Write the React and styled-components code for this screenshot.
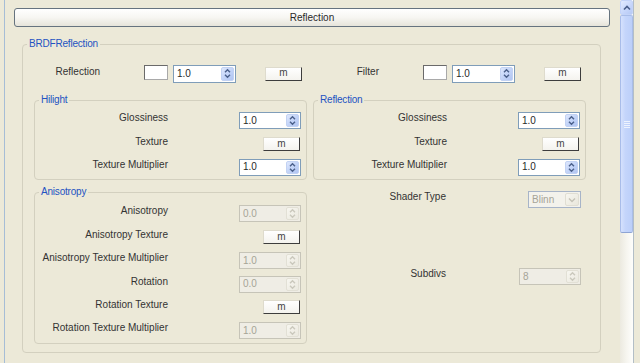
import React from 'react';
import styled, { createGlobalStyle } from 'styled-components';

const Global = createGlobalStyle`
  html, body { margin: 0; padding: 0; background: #ECE9D8; }
  body {
    font-family: "Liberation Sans", Arial, sans-serif;
    font-size: 10px;
    color: #333333;
    overflow: hidden;
  }
  * { box-sizing: border-box; }
`;

const Window = styled.div`
  width: 640px;
  height: 363px;
  overflow: hidden;
  background: #ECE9D8;
  display: flex;
`;

const Panel = styled.div`
  margin-left: 4px;
  width: 630px;
  height: 100%;
  border-left: 1px solid #a6bdd6;
  border-right: 1px solid #b3bec6;
  display: flex;
`;

const Content = styled.div`
  flex: 1;
  display: flex;
  flex-direction: column;
  min-width: 0;
`;

const HeaderButton = styled.div`
  margin: 8px 10px 0 9px;
  height: 19px;
  border: 1px solid #66737f;
  border-radius: 3px;
  background: linear-gradient(#ffffff 0%, #f7f6f2 50%, #e6e4da 100%);
  display: flex;
  align-items: center;
  justify-content: center;
  font-size: 10px;
  color: #2a2a2a;
`;

const Group = styled.fieldset`
  margin: 0;
  padding: 0;
  min-width: 0;
  border: 1px solid #d3d0bf;
  border-radius: 4px;
`;

const Legend = styled.legend`
  margin-left: 4px;
  padding: 0 2px;
  line-height: 12px;
  font-size: 10px;
  letter-spacing: -0.2px;
  color: #2353c2;
`;

const BRDFGroup = styled(Group)`
  margin: 11px 0 0 17px;
  width: 579px;
`;

const BRDFInner = styled.div`
  padding: 12px 14px 8px 11px;
  display: flex;
  flex-direction: column;
`;

const Pair = styled.div`
  display: grid;
  grid-template-columns: 273px 273px;
  column-gap: 6px;
  margin-top: ${p => p.$top || 0}px;
`;

const ColorRow = styled.div`
  display: flex;
  align-items: center;
  height: 23px;
`;

const ColorLabel = styled.div`
  width: 66px;
  text-align: right;
  line-height: 12px;
  padding-bottom: 4px;
  white-space: nowrap;
`;

const Swatch = styled.div`
  margin-left: 44px;
  width: 24px;
  height: 15px;
  margin-bottom: 3px;
  background: #ffffff;
  border: 1px solid #6a6a6a;
  border-right-color: #a9a9a9;
  border-bottom-color: #a9a9a9;
`;

const GroupInner = styled.div`
  padding-top: ${p => p.$top}px;
  display: flex;
  flex-direction: column;
`;

const ParamRow = styled.div`
  display: grid;
  grid-template-columns: 133px 1fr;
  align-items: center;
  height: 23.4px;
  padding-right: 5px;
`;

const RowLabel = styled.div`
  text-align: right;
  line-height: 12px;
  padding-bottom: 5px;
  white-space: nowrap;
`;

const ControlCell = styled.div`
  display: flex;
  justify-content: flex-end;
  align-items: center;
`;

const SpinBox = styled.div`
  display: flex;
  align-items: center;
  width: ${p => p.$w || 62}px;
  height: ${p => p.$h || 17}px;
  margin-left: ${p => p.$ml || 0}px;
  border: 1px solid ${p => (p.$disabled ? '#c6c4b8' : '#7f9db9')};
  background: ${p => (p.$disabled ? '#efede5' : '#ffffff')};
  padding: 0 1px 0 0;
`;

const SpinValue = styled.span`
  flex: 1;
  padding-left: 3px;
  line-height: 12px;
  font-size: 10px;
  color: ${p => (p.$disabled ? '#a6a497' : '#2a2a2a')};
`;

const SpinButtons = styled.div`
  width: 13px;
  height: calc(100% - 2px);
  border-radius: 2px;
  display: flex;
  align-items: center;
  justify-content: center;
  background: ${p =>
    p.$disabled
      ? 'linear-gradient(135deg, #f7f6f0, #ebe9df)'
      : 'linear-gradient(135deg, #dfe8fd 0%, #c3d4f8 50%, #b1c5f2 100%)'};
  border: 1px solid ${p => (p.$disabled ? '#e2e0d5' : '#c2d2f3')};
`;

const MButton = styled.div`
  width: 37px;
  height: 14px;
  margin-left: ${p => p.$ml || 0}px;
  margin-right: ${p => p.$mr || 0}px;
  border: 1px solid #dedbcd;
  border-right-color: #3d3d3d;
  border-bottom-color: #3d3d3d;
  background: linear-gradient(#ffffff, #f4f3ee);
  display: flex;
  align-items: center;
  justify-content: center;
  font-size: 10px;
  line-height: 10px;
  color: #444;
  padding-bottom: 1px;
`;

const RightColumn = styled.div`
  display: flex;
  flex-direction: column;
  padding-top: 2px;
`;

const Spacer = styled.div`
  height: ${p => p.$h}px;
`;

const Combo = styled.div`
  width: 53px;
  height: 17px;
  border: 1px solid #a7b4c8;
  background: #f3f2ec;
  display: flex;
  align-items: center;
  padding: 1px;
`;

const ComboText = styled.span`
  flex: 1;
  padding-left: 2px;
  color: #a6a497;
  line-height: 12px;
`;

const ComboButton = styled.div`
  width: 14px;
  height: 100%;
  border-radius: 2px;
  background: linear-gradient(135deg, #f7f6f0, #e9e7dc);
  border: 1px solid #e0ded3;
  display: flex;
  align-items: center;
  justify-content: center;
`;

const Scrollbar = styled.div`
  width: 13px;
  height: 100%;
  display: flex;
  flex-direction: column;
  background: linear-gradient(to right, #eceae0 0%, #f6f5ef 50%, #fefefc 100%);
`;

const ScrollArrow = styled.div`
  height: 15px;
  border: 1px solid #c3d3f8;
  border-radius: 2px;
  background: linear-gradient(135deg, #e2ebfe 0%, #c5d5fa 60%, #b6c9f4 100%);
  display: flex;
  align-items: center;
  justify-content: center;
`;

const Thumb = styled.div`
  height: 218px;
  border: 1px solid #a9bde9;
  border-bottom-color: #8ea4d4;
  border-radius: 2px;
  background: linear-gradient(to right, #d5e1fd 0%, #c4d5fb 40%, #bccff9 100%);
  display: flex;
  align-items: center;
  justify-content: center;
`;

const Grip = styled.div`
  width: 6px;
  height: 7px;
  background: repeating-linear-gradient(#eef3fe 0px, #eef3fe 1px, transparent 1px, transparent 2px);
`;

const SpinArrows = ({ color }) => (
  <svg width="7" height="11" viewBox="0 0 7 11">
    <path d="M1 4.2 L3.5 1.7 L6 4.2" stroke={color} strokeWidth="1.4" fill="none" />
    <path d="M1 6.8 L3.5 9.3 L6 6.8" stroke={color} strokeWidth="1.4" fill="none" />
  </svg>
);

const DownArrow = ({ color }) => (
  <svg width="8" height="6" viewBox="0 0 8 6">
    <path d="M1 1.5 L4 4.5 L7 1.5" stroke={color} strokeWidth="1.4" fill="none" />
  </svg>
);

const UpArrow = ({ color }) => (
  <svg width="8" height="6" viewBox="0 0 8 6">
    <path d="M1 4.5 L4 1.5 L7 4.5" stroke={color} strokeWidth="1.6" fill="none" />
  </svg>
);

const Spinner = ({ value, disabled, w, h, ml }) => (
  <SpinBox $disabled={disabled} $w={w} $h={h} $ml={ml}>
    <SpinValue $disabled={disabled}>{value}</SpinValue>
    <SpinButtons $disabled={disabled}>
      <SpinArrows color={disabled ? '#cac8bc' : '#4a5f8a'} />
    </SpinButtons>
  </SpinBox>
);

const ColorParam = ({ label }) => (
  <ColorRow>
    <ColorLabel>{label}</ColorLabel>
    <Swatch />
    <Spinner value="1.0" w={63} h={18} ml={5} />
    <MButton $ml={29}>m</MButton>
  </ColorRow>
);

const Param = ({ label, children }) => (
  <ParamRow>
    <RowLabel>{label}</RowLabel>
    <ControlCell>{children}</ControlCell>
  </ParamRow>
);

const Tex = () => <MButton $mr={1}>m</MButton>;

export default function App() {
  return (
    <>
      <Global />
      <Window>
        <Panel>
          <Content>
            <HeaderButton>Reflection</HeaderButton>
            <BRDFGroup>
              <Legend>BRDFReflection</Legend>
              <BRDFInner>
                <Pair>
                  <ColorParam label="Reflection" />
                  <ColorParam label="Filter" />
                </Pair>
                <Pair $top={9}>
                  <Group>
                    <Legend>Hilight</Legend>
                    <GroupInner $top={3}>
                      <Param label="Glossiness"><Spinner value="1.0" /></Param>
                      <Param label="Texture"><Tex /></Param>
                      <Param label="Texture Multiplier"><Spinner value="1.0" /></Param>
                    </GroupInner>
                  </Group>
                  <Group>
                    <Legend>Reflection</Legend>
                    <GroupInner $top={3}>
                      <Param label="Glossiness"><Spinner value="1.0" /></Param>
                      <Param label="Texture"><Tex /></Param>
                      <Param label="Texture Multiplier"><Spinner value="1.0" /></Param>
                    </GroupInner>
                  </Group>
                </Pair>
                <Pair $top={6}>
                  <Group>
                    <Legend>Anisotropy</Legend>
                    <GroupInner $top={4}>
                      <Param label="Anisotropy"><Spinner value="0.0" disabled /></Param>
                      <Param label="Anisotropy Texture"><Tex /></Param>
                      <Param label="Anisotropy Texture Multiplier"><Spinner value="1.0" disabled /></Param>
                      <Param label="Rotation"><Spinner value="0.0" disabled /></Param>
                      <Param label="Rotation Texture"><Tex /></Param>
                      <Param label="Rotation Texture Multiplier"><Spinner value="1.0" disabled /></Param>
                    </GroupInner>
                  </Group>
                  <RightColumn>
                    <Param label="Shader Type">
                      <Combo>
                        <ComboText>Blinn</ComboText>
                        <ComboButton>
                          <DownArrow color="#c4c2b6" />
                        </ComboButton>
                      </Combo>
                    </Param>
                    <Spacer $h={53.6} />
                    <Param label="Subdivs"><Spinner value="8" disabled /></Param>
                  </RightColumn>
                </Pair>
              </BRDFInner>
            </BRDFGroup>
          </Content>
          <Scrollbar>
            <ScrollArrow>
              <UpArrow color="#4a5f8a" />
            </ScrollArrow>
            <Thumb>
              <Grip />
            </Thumb>
          </Scrollbar>
        </Panel>
      </Window>
    </>
  );
}
